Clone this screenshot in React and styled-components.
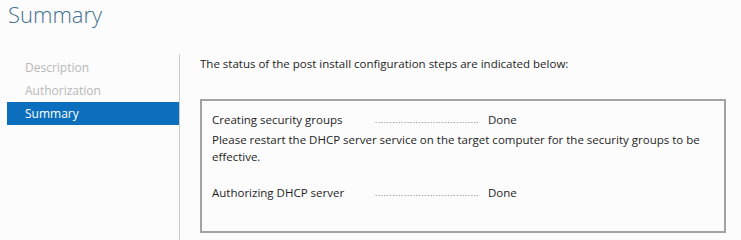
import styled, { createGlobalStyle } from "styled-components";

const Global = createGlobalStyle`
  body {
    margin: 0;
    background: #fcfcfc;
    font-family: "Open Sans", "Liberation Sans", sans-serif;
    color: #1e1e1e;
  }
`

const steps = [
  { label: "Creating security groups", status: "Done", note: "Please restart the DHCP server service on the target computer for the security groups to be effective." },
  { label: "Authorizing DHCP server", status: "Done" },
];

function App() {
  return (
    <Page>
      <Global />
      <Title>Summary</Title>
      <Body>
        <Sidebar>
          <NavItem>Description</NavItem>
          <NavItem>Authorization</NavItem>
          <NavItem $active>Summary</NavItem>
        </Sidebar>
        <Content>
          <Intro>The status of the post install configuration steps are indicated below:</Intro>
          <StatusBox>
            {steps.map((s) => (
              <Step key={s.label}>
                <StepRow>
                  <StepLabel>{s.label}</StepLabel>
                  <Dots>....................................</Dots>
                  <StepStatus>{s.status}</StepStatus>
                </StepRow>
                {s.note && <Note>{s.note}</Note>}
              </Step>
            ))}
          </StatusBox>
        </Content>
      </Body>
    </Page>
  );
}

export default App;

const Page = styled.div`
  display: flex;
  flex-direction: column;
  width: 741px;
  height: 240px;
  overflow: hidden;
`
const Title = styled.h1`
  margin: -1px 0 0 8px;
  height: 55px;
  font-size: 22px;
  line-height: 30px;
  font-weight: 300;
  color: #44708f;
`
const Body = styled.div`
  display: flex;
  flex: 1;
`
const Sidebar = styled.div`
  display: flex;
  flex-direction: column;
  width: 172px;
  padding: 2px 0 0 7px;
  border-right: 1px solid #cacaca;
`
const NavItem = styled.div`
  height: 23px;
  padding-left: 18px;
  font-size: 12px;
  line-height: 23px;
  color: ${(p) => (p.$active ? "#ffffff" : "#b8b8b8")};
  background: ${(p) => (p.$active ? "#0b6fbe" : "transparent")};
`
const Content = styled.div`
  display: flex;
  flex-direction: column;
  padding: 1px 0 0 20px;
`
const Intro = styled.p`
  margin: 0 0 27px;
  font-size: 11.5px;
  line-height: 17px;
`
const StatusBox = styled.div`
  width: 502px;
  height: 120px;
  padding: 10px 10px 0 10px;
  border: 2px solid #a3a3a3;
  display: flex;
  flex-direction: column;
  gap: 19px;
`
const Step = styled.div`
  display: flex;
  flex-direction: column;
  gap: 3px;
`
const StepRow = styled.div`
  display: flex;
  font-size: 11.5px;
  line-height: 17px;
`
const StepLabel = styled.span`
  width: 163px;
`
const Dots = styled.span`
  width: 103px;
  overflow: hidden;
  white-space: nowrap;
  font-size: 8px;
  letter-spacing: 0.8px;
  color: #555;
  margin-right: 10px;
`
const StepStatus = styled.span``
const Note = styled.p`
  margin: 0;
  font-size: 11.5px;
  line-height: 17px;
`
